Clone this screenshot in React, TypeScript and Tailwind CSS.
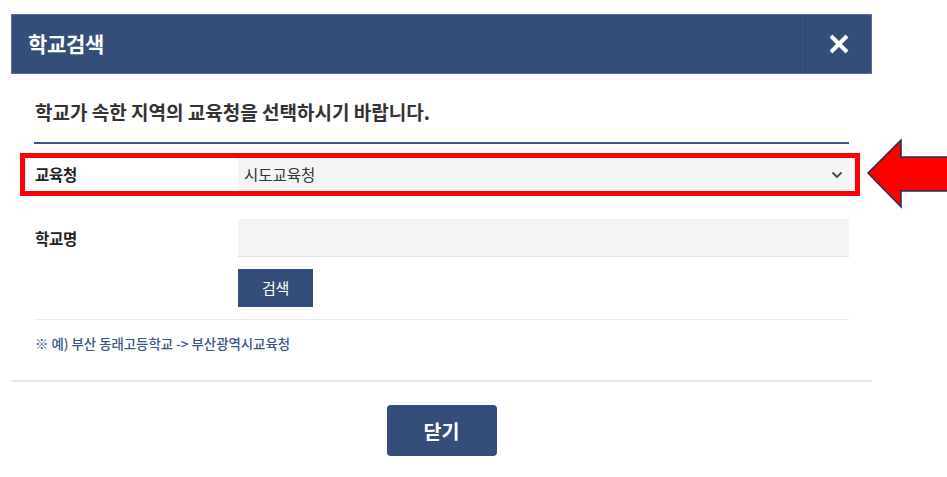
import React from "react";

const font = { fontFamily: '"Noto Sans CJK KR", "Noto Sans", sans-serif' };

export default function App() {
  return (
    <div className="relative w-[947px] h-[477px] bg-white overflow-hidden" style={font}>
      <div className="ml-[11px] pt-[14px] w-[861px]">
        {/* Header */}
        <div className="h-[60px] bg-[#344d79] flex items-center border border-[#5b6f95]">
          <div className="flex-1 pl-[16px] text-[21px] font-bold text-white tracking-[-0.3px]">학교검색</div>
          <div className="w-[66px] h-full border-l border-[#2f466f] flex items-center justify-center">
            <svg width="22" height="22" viewBox="0 0 22 22">
              <path d="M3 3 L19 19 M19 3 L3 19" stroke="white" strokeWidth="4" strokeLinecap="butt" />
            </svg>
          </div>
        </div>

        {/* Body */}
        <div className="px-[23px]">
          <div className="pt-[26px] pb-[18px] text-[19px] leading-[24px] font-bold text-[#333] tracking-[0px] pl-[1px]">
            학교가 속한 지역의 교육청을 선택하시기 바랍니다.
          </div>
          <div className="h-[2px] bg-[#3f5585]" />

          {/* Row 1 */}
          <div className="flex py-[12px] border-b border-[#efefef]">
            <div className="w-[204px] flex items-center pl-[1px] text-[15.5px] font-bold text-[#222] tracking-[-0.3px]">교육청</div>
            <div className="flex-1 h-[38px] bg-[#f4f4f4] flex items-center justify-between pl-[6px] pr-[6px]">
              <span className="text-[15.5px] text-[#333] tracking-[0px]">시도교육청</span>
              <svg width="12" height="8" viewBox="0 0 12 8">
                <path d="M1.5 1.5 L6 6 L10.5 1.5" stroke="#444" strokeWidth="1.8" fill="none" />
              </svg>
            </div>
          </div>

          {/* Row 2 */}
          <div className="flex py-[12px] border-b border-[#ececec]">
            <div className="w-[204px] pt-[9px] pl-[1px] text-[15.5px] leading-[20px] font-bold text-[#222] tracking-[-0.3px]">학교명</div>
            <div className="flex-1 flex flex-col items-start gap-[12px]">
              <div className="w-full h-[38px] bg-[#f4f4f4] border-b border-[#e2e2e2]" />
              <button className="w-[75px] h-[38px] bg-[#344d79] text-white text-[15px] tracking-[-0.3px] flex items-center justify-center">
                검색
              </button>
            </div>
          </div>

          <div className="pt-[14px] pb-[28px] text-[13.4px] leading-[18px] font-medium text-[#3a5589] tracking-[0px] pl-[1px]">
            ※ 예) 부산 동래고등학교 -&gt; 부산광역시교육청
          </div>
        </div>

        {/* Footer */}
        <div className="border-t-2 border-[#e6e6e6] pt-[23px] flex justify-center">
          <button className="w-[110px] h-[51px] rounded-[4px] bg-[#344d79] text-white text-[19.5px] font-bold tracking-[0px] flex items-center justify-center">
            닫기
          </button>
        </div>
      </div>

      {/* Annotation: red highlight box */}
      <div className="absolute left-[20px] top-[153px] w-[840px] h-[43px] border-[5px] border-[#ff0000]" />

      {/* Annotation: red arrow */}
      <svg className="absolute left-[860px] top-[134px]" width="90" height="80" viewBox="860 134 90 80">
        <path
          d="M868 173 L901 140 L901 157 L952 157 L952 191 L901 191 L901 207 Z"
          fill="#ff0000"
          stroke="#1f3050"
          strokeWidth="1.5"
          strokeLinejoin="miter"
        />
      </svg>
    </div>
  );
}
